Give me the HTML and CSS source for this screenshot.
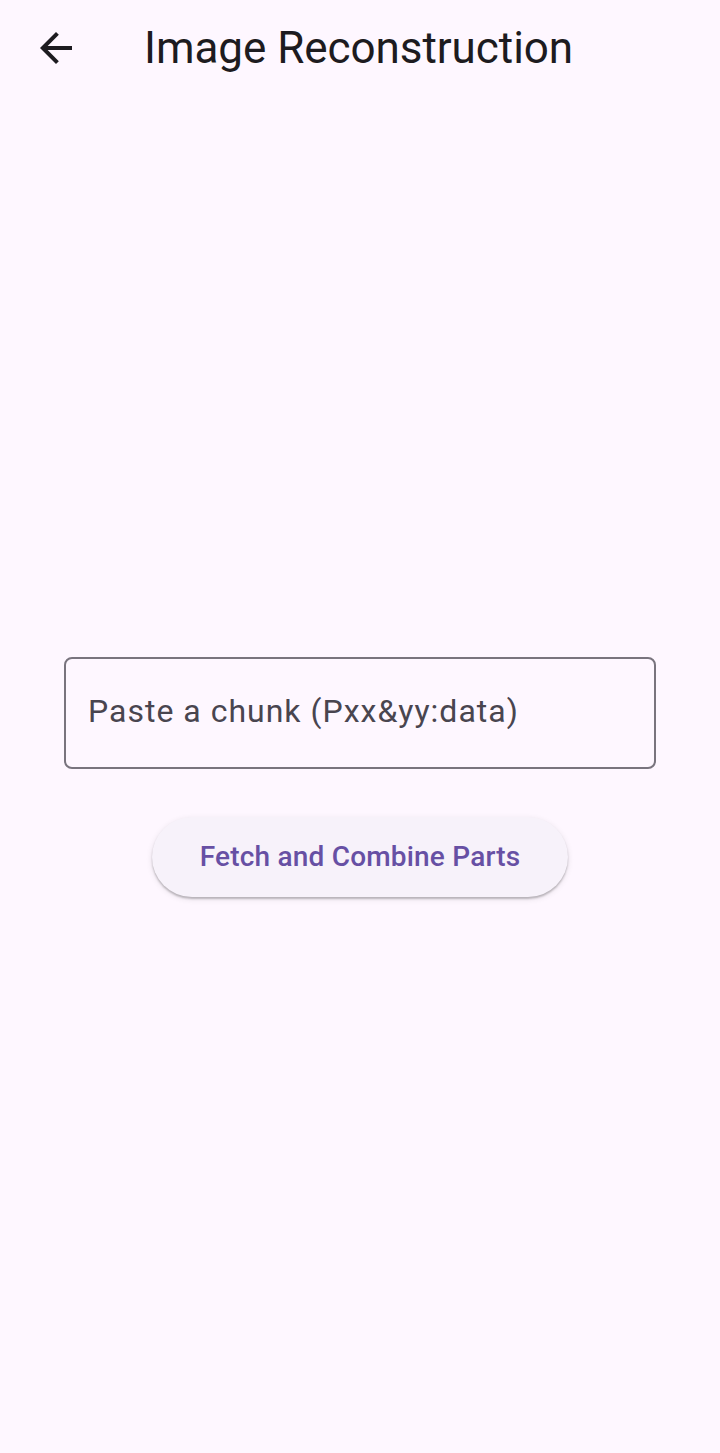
FILE: index.html
```html
<!DOCTYPE html>
<html lang="en">
<head>
<meta charset="utf-8">
<title>Image Reconstruction</title>
<link rel="stylesheet" href="styles.css">
</head>
<body>
<div class="screen">
  <header class="appbar">
    <button class="back" aria-label="Back">
      <svg width="48" height="48" viewBox="0 0 24 24" aria-hidden="true">
        <path d="M20 11H7.83l5.59-5.59L12 4l-8 8 8 8 1.41-1.41L7.83 13H20v-2z" fill="#1D1B20"/>
      </svg>
    </button>
    <h1 class="title">Image Reconstruction</h1>
  </header>
  <main class="body">
    <div class="content">
      <label class="field">
        <input class="input" type="text" placeholder="Paste a chunk (Pxx&amp;yy:data)">
      </label>
      <button class="action">Fetch and Combine Parts</button>
    </div>
  </main>
</div>
</body>
</html>
```
FILE: styles.css
```css
* { box-sizing: border-box; }
html, body { margin: 0; padding: 0; }
body {
  background: #FEF7FF;
  font-family: Roboto, "Noto Sans", sans-serif;
  color: #1D1B20;
}
.screen {
  width: 720px;
  height: 1453px;
  display: flex;
  flex-direction: column;
}
.appbar {
  height: 96px;
  display: flex;
  align-items: center;
  padding-left: 32px;
  flex-shrink: 0;
}
.back {
  width: 48px;
  height: 48px;
  padding: 0;
  border: 0;
  background: transparent;
  display: flex;
  align-items: center;
  justify-content: center;
}
.back svg { display: block; }
.title {
  margin: 0 0 0 64px;
  font-size: 44px;
  font-weight: 400;
  line-height: 56px;
  letter-spacing: -0.05px;
  color: #1D1B20;
}
.body {
  flex: 1;
  display: flex;
  align-items: center;
  justify-content: center;
  padding: 4px 64px 0;
}
.content {
  width: 100%;
  display: flex;
  flex-direction: column;
  align-items: center;
  gap: 48px;
}
.field {
  display: block;
  width: 100%;
}
.input {
  display: block;
  width: 100%;
  height: 112px;
  border: 2px solid #79747E;
  border-radius: 8px;
  background: transparent;
  padding: 0 22px 3px;
  font-family: Roboto, "Noto Sans", sans-serif;
  font-size: 32px;
  letter-spacing: 1px;
  color: #1D1B20;
  outline: none;
}
.input::placeholder { color: #49454F; opacity: 1; }
.action {
  height: 80px;
  padding: 0 48px;
  border: 0;
  border-radius: 40px;
  background: #F7F2FA;
  color: #6750A4;
  font-family: Roboto, "Noto Sans", sans-serif;
  font-size: 28px;
  font-weight: 500;
  letter-spacing: 0.2px;
  box-shadow: 0 2px 2px rgba(0,0,0,0.22), 0 2px 6px rgba(0,0,0,0.10);
}
```
